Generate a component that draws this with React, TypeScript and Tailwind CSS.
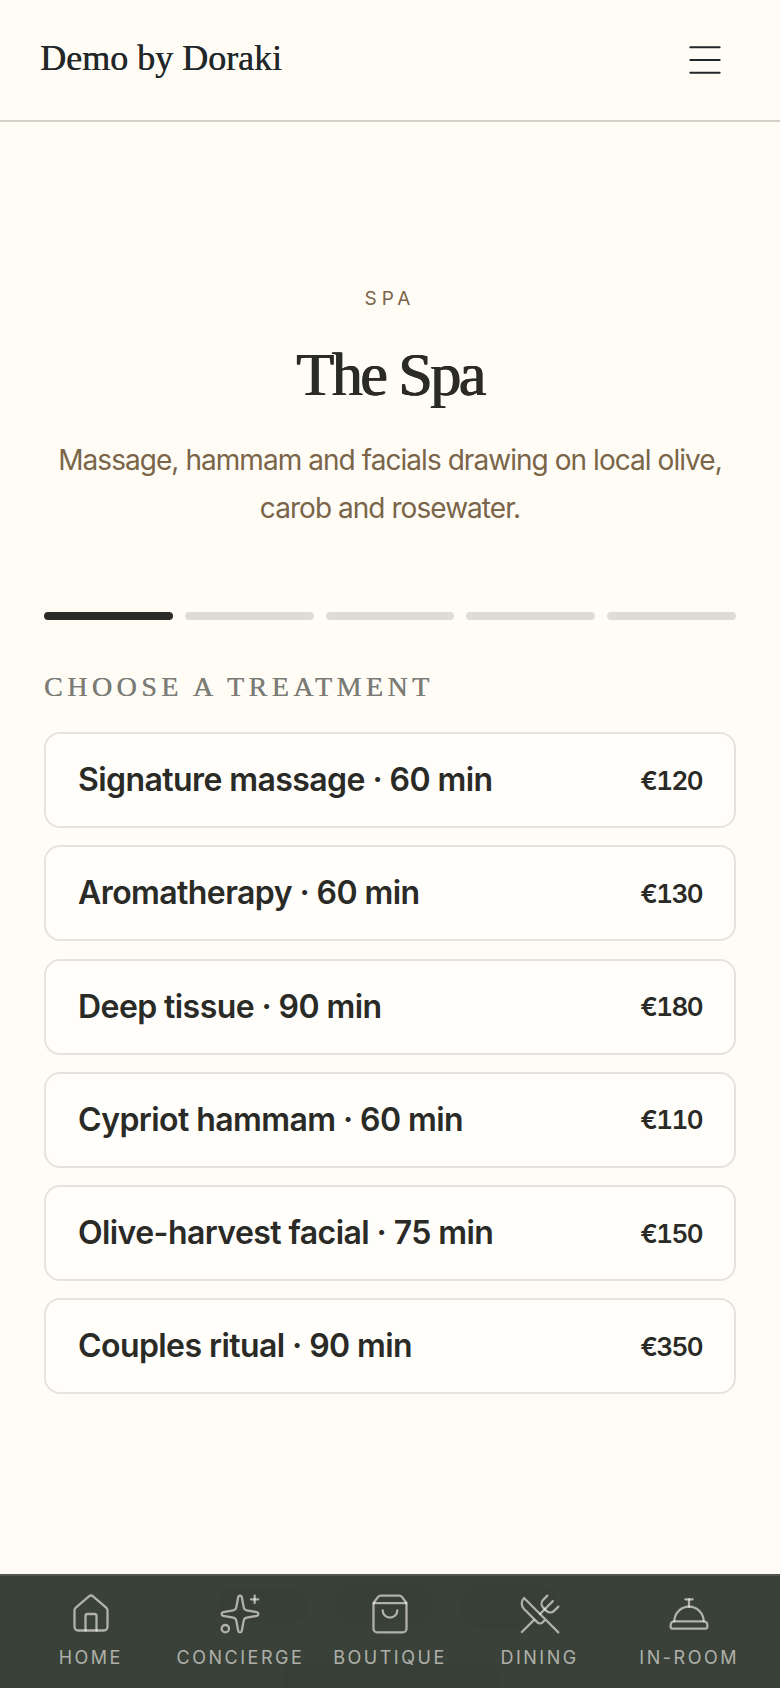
import { House, Sparkles, ShoppingBag, UtensilsCrossed, ConciergeBell, Menu } from "lucide-react";

const serif = "font-['Liberation_Serif',serif]";
const sans = "font-['Inter',sans-serif]";

const treatments = [
  { name: "Signature massage · 60 min", price: "€120" },
  { name: "Aromatherapy · 60 min", price: "€130" },
  { name: "Deep tissue · 90 min", price: "€180" },
  { name: "Cypriot hammam · 60 min", price: "€110" },
  { name: "Olive-harvest facial · 75 min", price: "€150" },
  { name: "Couples ritual · 90 min", price: "€350" },
];

const navItems = [
  { label: "HOME", Icon: House },
  { label: "CONCIERGE", Icon: Sparkles },
  { label: "BOUTIQUE", Icon: ShoppingBag },
  { label: "DINING", Icon: UtensilsCrossed },
  { label: "IN-ROOM", Icon: ConciergeBell },
];

export default function App() {
  return (
    <div className={`relative h-[1688px] overflow-hidden bg-[#fffcf6] ${sans}`}>
      <header className="flex h-[122px] items-center justify-between border-b-2 border-[#d6d0c6] pl-10 pr-[53px]">
        <span className={`-mt-1 text-[36px] text-[#22282a] [text-shadow:0.4px_0_0_#22282a] ${serif}`}>Demo by Doraki</span>
        <Menu size={44} strokeWidth={1.1} className="text-[#22282a]" />
      </header>

      <section className="px-11 pt-[162px] text-center">
        <p className="text-[19px] leading-[30px] tracking-[0.26em] text-[#7a6548]">SPA</p>
        <h1
          className={`mt-[29px] text-[62px] leading-none tracking-[-0.04em] text-[#2a2a26] [text-shadow:0.8px_0_0_#2a2a26,-0.4px_0_0_#2a2a26] ${serif}`}
        >
          The Spa
        </h1>
        <p className="mt-[31px] text-[28px] leading-[48px] tracking-[-0.034em] text-[#7a6548]">
          Massage, hammam and facials drawing on local olive, carob and rosewater.
        </p>
      </section>

      <main className="px-11 pt-[80px]">
        <div className="grid grid-cols-5 gap-3">
          <div className="h-2 rounded-full bg-[#2a2a26]" />
          <div className="h-2 rounded-full bg-[#dfdcd5]" />
          <div className="h-2 rounded-full bg-[#dfdcd5]" />
          <div className="h-2 rounded-full bg-[#dfdcd5]" />
          <div className="h-2 rounded-full bg-[#dfdcd5]" />
        </div>
        <h2 className={`mt-[46px] text-[28px] tracking-[0.16em] text-[#7c7c76] [text-shadow:0.3px_0_0_#7c7c76] ${serif}`}>
          CHOOSE A TREATMENT
        </h2>
        <div className="mt-6 flex flex-col gap-[17.25px]">
          {treatments.map((t) => (
            <div
              key={t.name}
              className="flex h-[96px] items-center justify-between rounded-2xl border-2 border-[#e5e3de] bg-[#fffefb] px-8"
            >
              <span className="text-[32px] font-semibold tracking-[-0.018em] text-[#2a2a26]">{t.name}</span>
              <span className="text-[26px] font-semibold tracking-[-0.06em] tabular-nums text-[#2a2a26]">{t.price}</span>
            </div>
          ))}
        </div>
      </main>

      <nav className="absolute inset-x-0 bottom-0 h-[114px] overflow-hidden border-t-2 border-[#50564e] bg-[#3a4138]">
        <div className="absolute left-[218px] top-[11px] h-[36px] w-[89px] rounded-full bg-[#383f36]" />
        <div className="absolute left-[335px] top-[9px] h-[38px] w-[98px] rounded-full bg-[#383f36]" />
        <div className="absolute left-[460px] top-[9px] h-[45px] w-[97px] rounded-full bg-[#383f36]" />
        <div className="absolute left-[282px] top-[87px] h-[27px] w-[216px] rounded-t-lg bg-[#383f36]" />
        <div className="relative grid grid-cols-5 px-4 pt-[16px]">
          {navItems.map(({ label, Icon }) => (
            <div key={label} className="flex flex-col items-center text-[#fffdf8]/60">
              <Icon size={44} strokeWidth={1.25} />
              <span className="mt-[10px] text-[18px] leading-[24px] tracking-[0.14em]">{label}</span>
            </div>
          ))}
        </div>
      </nav>
    </div>
  );
}
